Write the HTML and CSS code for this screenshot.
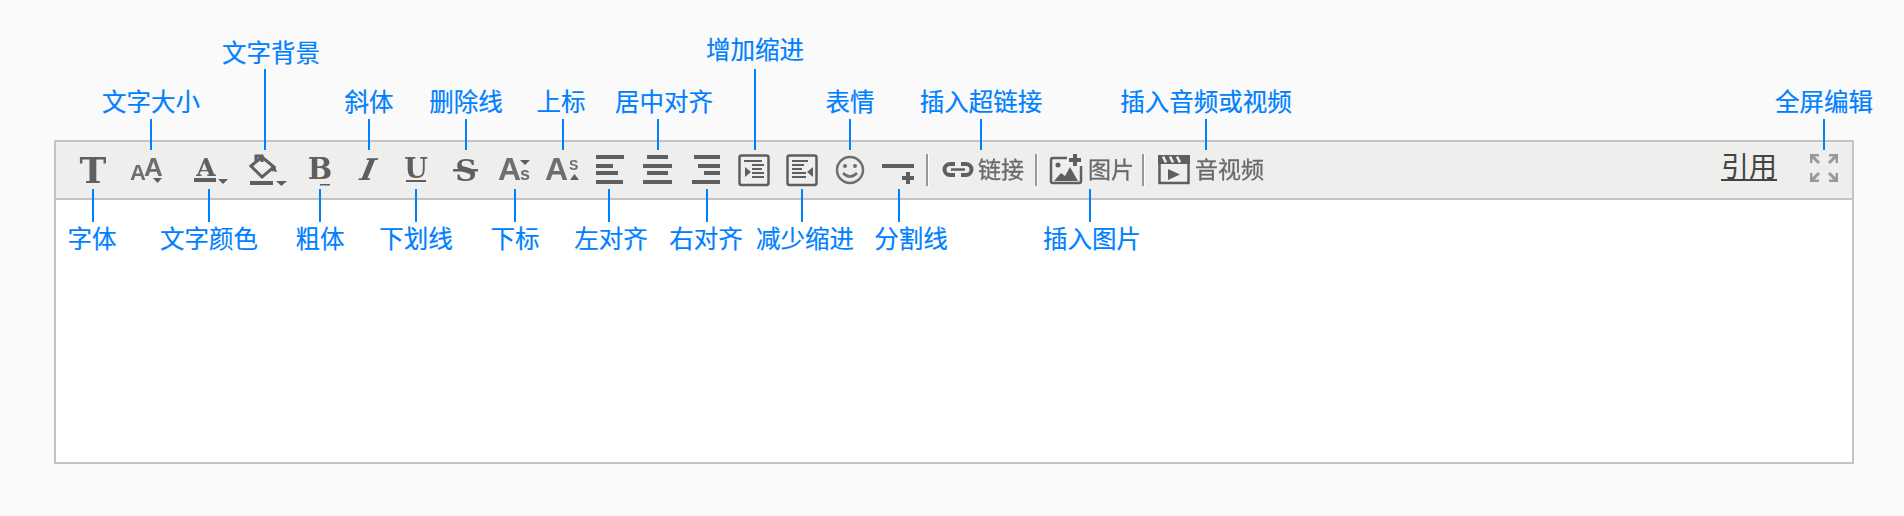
FILE: index.html
```html
<!DOCTYPE html>
<html lang="zh-CN">
<head>
<meta charset="utf-8">
<title>编辑器工具栏说明</title>
<link rel="stylesheet" href="styles.css">
</head>
<body>
<main class="stage">
  <section class="editor">
    <div class="toolbar">
      <svg class="tool" width="50" height="40" viewBox="70 150 50 40"><text class="serif" x="93" y="183" font-size="36" text-anchor="middle">T</text></svg>
      <svg class="tool" width="60" height="40" viewBox="120 150 60 40"><text class="sans" x="130" y="180"><tspan font-size="22">A</tspan><tspan font-size="26" dx="-2" dy="-4">A</tspan></text><path class="fill" d="M153 178h9l-4.500 5z"/></svg>
      <svg class="tool" width="65" height="40" viewBox="180 150 65 40"><text class="serif" x="206" y="176" font-size="25" text-anchor="middle">A</text><path class="fill" d="M194 178h22v4h-22zM218 179h10l-5 5z"/></svg>
      <svg class="tool" width="55" height="40" viewBox="245 150 55 40"><path class="line heavy" d="M251 166l11-9 12 10-12 10zM256 161v-5h6v6"/><path class="fill" d="M270 163l5 3 2 6-5-1zM250 181h23v4h-23zM276 181h11l-5.500 5z"/></svg>
      <svg class="tool" width="50" height="40" viewBox="300 150 50 40"><text class="serif" x="320" y="179" font-size="29" text-anchor="middle">B</text><path class="fill" d="M320 184h10v1.500h-10z"/></svg>
      <svg class="tool" width="45" height="40" viewBox="350 150 45 40"><text class="serif italic" transform="translate(366 180) skewX(-12)" font-size="30" text-anchor="middle">I</text></svg>
      <svg class="tool" width="50" height="40" viewBox="395 150 50 40"><text class="serif" x="416" y="178" font-size="27" text-anchor="middle">U</text><path class="fill" d="M406 180h20v2h-20z"/></svg>
      <svg class="tool" width="45" height="40" viewBox="445 150 45 40"><text class="serif" x="466" y="181" font-size="30" text-anchor="middle">S</text><path class="fill" d="M453 169h25v2.500h-25z"/></svg>
      <svg class="tool" width="50" height="40" viewBox="490 150 50 40"><text class="sans" x="498" y="180"><tspan font-size="32">A</tspan><tspan font-size="18" dx="-1">s</tspan></text><path class="fill" d="M520 160h10l-5 5z"/></svg>
      <svg class="tool" width="50" height="40" viewBox="540 150 50 40"><text class="sans" x="545" y="180"><tspan font-size="32">A</tspan><tspan font-size="14" dx="1" dy="-10">S</tspan></text><path class="fill" d="M570 180h9l-4.500-6z"/></svg>
      <svg class="tool" width="50" height="40" viewBox="590 150 50 40"><path class="fill" d="M596 155h28v4h-28zM596 164h17v4h-17zM596 171h22v4h-22zM596 180h27v4h-27z"/></svg>
      <svg class="tool" width="48" height="40" viewBox="640 150 48 40"><path class="fill" d="M647 155h21v4h-21zM643 164h29v4h-29zM647 171h21v4h-21zM643 180h29v4h-29z"/></svg>
      <svg class="tool" width="46" height="40" viewBox="688 150 46 40"><path class="fill" d="M694 155h26v4h-26zM698 164h22v4h-22zM704 171h16v4h-16zM692 180h28v4h-28z"/></svg>
      <svg class="tool" width="48" height="40" viewBox="734 150 48 40"><rect class="line" x="739.500" y="155.500" width="29" height="29.500" rx="2"/><path class="fill" d="M744 160h18v2h-18zM752 164h12v2h-12zM752 168h10v2h-10zM752 172h12v2h-12zM752 176h12v2h-12zM745 167l6 5-6 5z"/></svg>
      <svg class="tool" width="50" height="40" viewBox="782 150 50 40"><rect class="line" x="787.500" y="155.500" width="29" height="29.500" rx="2"/><path class="fill" d="M792 160h16v2h-16zM792 164h12v2h-12zM792 168h10v2h-10zM792 172h14v2h-14zM792 176h14v2h-14zM813 167l-6 5 6 5z"/></svg>
      <svg class="tool" width="46" height="40" viewBox="832 150 46 40"><circle class="line soft" cx="850" cy="170" r="13"/><circle class="fill soft" cx="845" cy="166" r="2"/><circle class="fill soft" cx="855" cy="166" r="2"/><path class="line soft" d="M843 173q7 7 14 0"/></svg>
      <svg class="tool" width="48" height="40" viewBox="878 150 48 40"><path class="fill" d="M882 164h32v4h-32zM906 172h4v4h4v4h-4v4h-4v-4h-4v-4h4z"/></svg>
      <span class="sep"></span>
      <svg class="tool" width="49" height="40" viewBox="929 150 49 40"><path class="line thick" d="M955 164h-5a5.500 5.500 0 0 0 0 11h5M961 164h5a5.500 5.500 0 0 1 0 11h-5"/><path class="line" d="M951 169.500h14"/></svg>
      <span class="tool-text gap-link">链接</span>
      <span class="sep"></span>
      <svg class="tool" width="50" height="40" viewBox="1038 150 50 40"><path class="line" d="M1067 158h-14a2 2 0 0 0-2 2v21a2 2 0 0 0 2 2h26a2 2 0 0 0 2-2v-15"/><circle class="fill" cx="1058" cy="165" r="2.500"/><path class="fill" d="M1054 181l7-8 4 3 5-9 8 14zM1073 154h4v4h4v4h-4v4h-4v-4h-4v-4h4z"/></svg>
      <span class="tool-text gap-image">图片</span>
      <span class="sep"></span>
      <svg class="tool" width="50" height="40" viewBox="1145 150 50 40"><rect class="line" x="1159.500" y="157" width="29" height="26"/><path class="fill" d="M1158 155h32v9h-32zM1168 169v11l12-5.500z"/><path class="gap" d="M1163 156.500l3 6M1170 156.500l3 6M1177 156.500l3 6"/></svg>
      <span class="tool-text">音视频</span>
      <a class="quote">引用</a>
      <svg class="tool full" width="28" height="28" viewBox="1810 154 28 28"><path class="corner" d="M1811 163v-8h8M1812 156l7 7M1829 155h8v8M1836 156l-7 7M1811 173v8h8M1812 180l7-7M1829 181h8v-8M1836 180l-7-7"/></svg>
    </div>
    <div class="body"></div>
  </section>

  <div class="callout up c-size"><span class="label">文字大小</span><i class="wire"></i></div>
  <div class="callout up tall c-bg"><span class="label shift-r6">文字背景</span><i class="wire"></i></div>
  <div class="callout up c-italic"><span class="label">斜体</span><i class="wire"></i></div>
  <div class="callout up c-strike"><span class="label">删除线</span><i class="wire"></i></div>
  <div class="callout up c-sup"><span class="label shift-l2">上标</span><i class="wire"></i></div>
  <div class="callout up c-center"><span class="label shift-r6">居中对齐</span><i class="wire"></i></div>
  <div class="callout up tall raised c-indent"><span class="label">增加缩进</span><i class="wire"></i></div>
  <div class="callout up c-emoji"><span class="label">表情</span><i class="wire"></i></div>
  <div class="callout up c-link"><span class="label">插入超链接</span><i class="wire"></i></div>
  <div class="callout up c-media"><span class="label">插入音频或视频</span><i class="wire"></i></div>
  <div class="callout up c-full"><span class="label">全屏编辑</span><i class="wire"></i></div>

  <div class="callout down c-font"><i class="wire"></i><span class="label shift-l1">字体</span></div>
  <div class="callout down c-color"><i class="wire"></i><span class="label">文字颜色</span></div>
  <div class="callout down c-bold"><i class="wire"></i><span class="label">粗体</span></div>
  <div class="callout down c-under"><i class="wire"></i><span class="label">下划线</span></div>
  <div class="callout down c-sub"><i class="wire"></i><span class="label">下标</span></div>
  <div class="callout down c-left"><i class="wire"></i><span class="label shift-r2">左对齐</span></div>
  <div class="callout down c-right"><i class="wire"></i><span class="label shift-l1">右对齐</span></div>
  <div class="callout down c-outdent"><i class="wire"></i><span class="label shift-r3">减少缩进</span></div>
  <div class="callout down c-hr"><i class="wire"></i><span class="label shift-r12">分割线</span></div>
  <div class="callout down c-image"><i class="wire"></i><span class="label shift-r2">插入图片</span></div>
</main>
</body>
</html>
```
FILE: styles.css
```css
html, body { margin: 0; padding: 0; }
body {
  background: #fafafa;
  font-family: "Noto Sans CJK SC", "Noto Sans", sans-serif;
  overflow: hidden;
}
.stage {
  position: relative;
  box-sizing: border-box;
  width: 1904px;
  height: 516px;
  padding: 140px 50px 52px 54px;
}
.editor {
  box-sizing: border-box;
  height: 100%;
  border: 2px solid #c4c4c4;
  display: flex;
  flex-direction: column;
}
.toolbar {
  flex: none;
  height: 56px;
  display: flex;
  align-items: center;
  padding: 0 14px;
  background: #eeeeec;
  border-bottom: 2px solid #c4c4c4;
}
.body { flex: 1; background: #fff; }

.tool { flex: none; display: block; filter: blur(.5px); }
.full { margin-bottom: 4px; }
.serif { font-family: "DejaVu Serif", serif; font-weight: 700; fill: #5f5f5f; }
.italic { font-style: italic; }
.sans { font-family: "Liberation Sans", sans-serif; font-weight: 700; fill: #6e6e6e; }
.fill { fill: #5f5f5f; }
.line { fill: none; stroke: #5f5f5f; stroke-width: 2.500; }
.heavy { stroke-width: 3; }
.thick { stroke-width: 4; }
.soft { stroke: #6e6e6e; }
.fill.soft { fill: #6e6e6e; stroke: none; }
.gap { fill: none; stroke: #eeeeec; stroke-width: 2.500; }
.corner { fill: none; stroke: #999; stroke-width: 3; }

.sep {
  flex: none;
  width: 2px;
  height: 32px;
  background: #999;
  border-right: 1px solid #fff;
}
.tool-text {
  flex: none;
  margin-bottom: 4px;
  font-size: 23px;
  line-height: 40px;
  color: #6a6a6a;
  -webkit-text-stroke: .3px #6a6a6a;
  filter: blur(.4px);
}
.gap-link { width: 57px; }
.gap-image { width: 54px; }
.quote {
  margin-left: auto;
  margin-right: 33px;
  margin-bottom: 10px;
  font-size: 28px;
  line-height: 40px;
  color: #444;
  text-decoration: underline;
  text-decoration-thickness: 2px;
  text-underline-offset: 2px;
}

.callout {
  position: absolute;
  width: 0;
  display: flex;
  flex-direction: column;
  align-items: center;
}
.wire { flex: none; display: block; width: 2px; background: #007fff; }
.label {
  flex: none;
  font-size: 24.500px;
  line-height: 24px;
  color: #007fff;
  -webkit-text-stroke: .2px #007fff;
  white-space: nowrap;
}
.up { top: 89px; }
.up .wire { height: 31px; margin-top: 6px; }
.up.tall { top: 40px; }
.up.tall .wire { height: 81px; margin-top: 5px; }
.up.raised { top: 37px; }
.up.raised .wire { margin-top: 8px; }
.down { top: 189px; }
.down .wire { height: 33px; margin-bottom: 4px; }

.shift-l1 { transform: translateX(-1px); }
.shift-l2 { transform: translateX(-2px); }
.shift-r2 { transform: translateX(2px); }
.shift-r3 { transform: translateX(3px); }
.shift-r6 { transform: translateX(6px); }
.shift-r12 { transform: translateX(12px); }

.c-size { left: 151px; }
.c-bg { left: 265px; }
.c-italic { left: 369px; }
.c-strike { left: 466px; }
.c-sup { left: 563px; }
.c-center { left: 658px; }
.c-indent { left: 755px; }
.c-emoji { left: 850px; }
.c-link { left: 981px; }
.c-media { left: 1206px; }
.c-full { left: 1824px; }
.c-font { left: 93px; }
.c-color { left: 209px; }
.c-bold { left: 320px; }
.c-under { left: 416px; }
.c-sub { left: 515px; }
.c-left { left: 609px; }
.c-right { left: 707px; }
.c-outdent { left: 802px; }
.c-hr { left: 899px; }
.c-image { left: 1090px; }
```
